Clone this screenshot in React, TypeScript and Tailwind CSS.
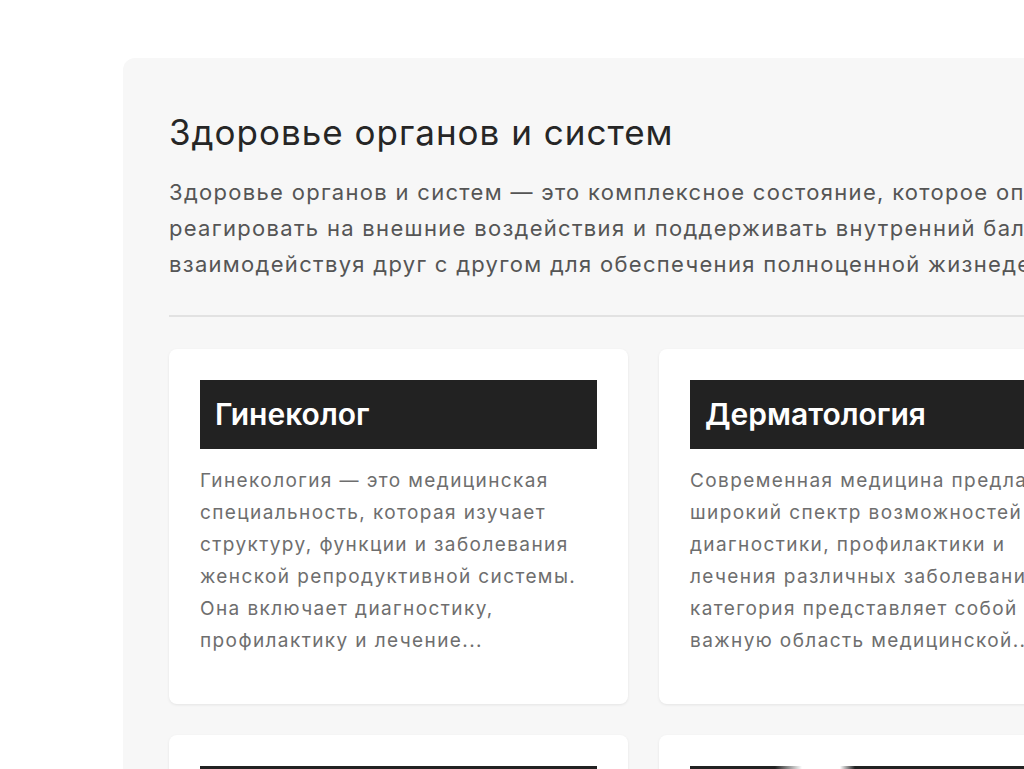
import React from "react";

const intro = [
  "Здоровье органов и систем — это комплексное состояние, которое определяет способность организма эффективно",
  "реагировать на внешние воздействия и поддерживать внутренний баланс. Все органы и системы работают слаженно,",
  "взаимодействуя друг с другом для обеспечения полноценной жизнедеятельности человека.",
];

const cards = [
  {
    title: "Гинеколог",
    lines: [
      "Гинекология — это медицинская",
      "специальность, которая изучает",
      "структуру, функции и заболевания",
      "женской репродуктивной системы.",
      "Она включает диагностику,",
      "профилактику и лечение...",
    ],
  },
  {
    title: "Дерматология",
    lines: [
      "Современная медицина предлагает",
      "широкий спектр возможностей для",
      "диагностики, профилактики и",
      "лечения различных заболеваний. Эта",
      "категория представляет собой",
      "важную область медицинской...",
    ],
  },
  {
    title: "Кардиология",
    lines: [
      "Кардиология — это раздел медицины,",
      "который занимается изучением",
      "сердечно-сосудистой системы.",
    ],
  },
  {
    title: "Неврология",
    lines: ["Неврология изучает нервную систему", "и её заболевания."],
  },
  {
    title: "",
    image: true,
    lines: [],
  },
  {
    title: "",
    lines: [],
  },
];

function Card({ title, lines, image }: { title: string; lines: string[]; image?: boolean }) {
  return (
    <div className="h-[355px] rounded-lg bg-white p-[31px] shadow-[0_1px_3px_rgba(0,0,0,0.08)]">
      <div
        className={
          image
            ? "flex h-[69px] items-center bg-[linear-gradient(90deg,#222_0px,#222_85px,#fff_112px,#fff_150px,#222_165px)] px-[15px]"
            : "flex h-[69px] items-center bg-[#222] px-[15px]"
        }
      >
        <h3 className="text-[30px] font-semibold text-white">{title}</h3>
      </div>
      <p className="mt-[16px] text-[19px] leading-[32px] tracking-[1.4px] text-[#6e6e6e]">
        {lines.map((l, i) => (
          <span key={i} className="block whitespace-nowrap">
            {l}
          </span>
        ))}
      </p>
    </div>
  );
}

export default function App() {
  return (
    <div
      className="h-[769px] w-[1024px] overflow-hidden bg-white pl-[123px] pt-[58px]"
      style={{ fontFamily: "Inter, 'Noto Sans', sans-serif" }}
    >
      <div className="w-[1500px] rounded-xl bg-[#f7f7f7] px-[46px] pb-10 pt-[54px]">
        <h1 className="text-[35px] leading-[41px] tracking-[1px] text-[#262626]">
          Здоровье органов и систем
        </h1>
        <p className="mt-[21px] text-[22px] leading-[36px] tracking-[1.3px] text-[#555]">
          {intro.map((l, i) => (
            <span key={i} className="block whitespace-nowrap">
              {l}
            </span>
          ))}
        </p>
        <div className="mt-[33px] h-[2px] bg-[#e2e2e2]" />
        <div className="mt-[32px] grid w-[1439px] grid-cols-3 gap-[31px]">
          {[cards[0], cards[1], cards[2], cards[5], cards[4], cards[3]].map((c, i) => (
            <Card key={i} {...c} />
          ))}
        </div>
      </div>
    </div>
  );
}
